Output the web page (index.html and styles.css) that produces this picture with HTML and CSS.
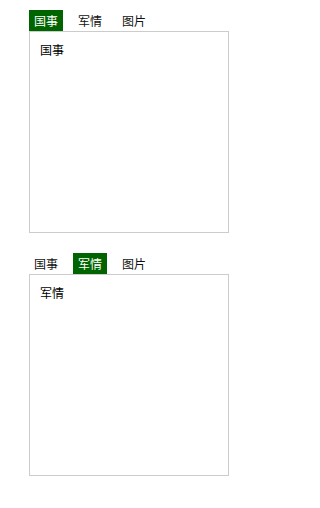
FILE: index.html
```html
<!DOCTYPE html>
<html>
<head>
<meta charset="utf-8">
<link rel="stylesheet" href="styles.css">
</head>
<body>
<div class="tabbox">
  <ul class="tabs">
    <li class="tab active">国事</li>
    <li class="tab">军情</li>
    <li class="tab">图片</li>
  </ul>
  <div class="panel">国事</div>
</div>
<div class="tabbox">
  <ul class="tabs">
    <li class="tab">国事</li>
    <li class="tab active">军情</li>
    <li class="tab">图片</li>
  </ul>
  <div class="panel">军情</div>
</div>
</body>
</html>
```

FILE: styles.css
```css
html, body {
  margin: 0;
  padding: 0;
  background: #fff;
}
body {
  padding: 10px 0 0 29px;
  font-family: "Noto Sans CJK SC", "Liberation Sans", sans-serif;
  font-size: 12px;
  color: #000;
}
.tabbox {
  width: 200px;
  margin-bottom: 20px;
}
.tabs {
  list-style: none;
  margin: 0;
  padding: 0;
  display: flex;
  gap: 10px;
}
.tab {
  width: 34px;
  height: 21px;
  line-height: 21px;
  text-align: center;
  color: #111;
}
.tab.active {
  background: #006400;
  color: #fff;
}
.panel {
  height: 180px;
  border: 1px solid #ccc;
  padding: 10px;
  line-height: 16px;
}
```
